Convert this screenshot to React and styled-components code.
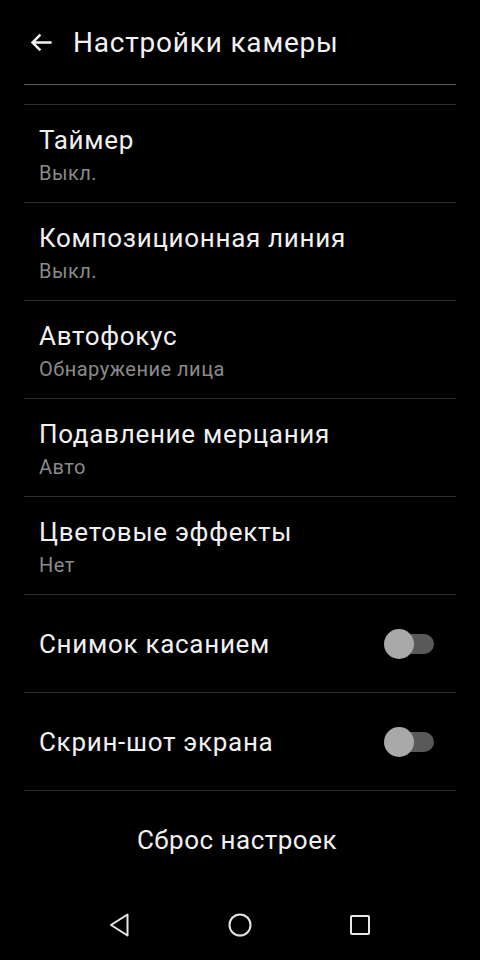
import React from "react";
import styled, { createGlobalStyle } from "styled-components";

const GlobalStyle = createGlobalStyle`
  html, body {
    margin: 0;
    padding: 0;
    background: #000;
  }
  body {
    font-family: Roboto, "Noto Sans", sans-serif;
    color: #fff;
  }
`;

const Screen = styled.div`
  width: 480px;
  height: 960px;
  background: #000;
  display: flex;
  flex-direction: column;
  overflow: hidden;
`;

const Header = styled.header`
  flex: 0 0 84px;
  display: flex;
  align-items: center;
  padding-left: 28px;
  box-sizing: border-box;
  gap: 18px;
`;

const Title = styled.h1`
  margin: 0;
  font-size: 28px;
  font-weight: 400;
  color: #f2f2f2;
  letter-spacing: 0.8px;
`;

const List = styled.div`
  flex: 0 0 auto;
  margin: 0 24px;
  border-top: 1px solid #5c5c5c;
  display: flex;
  flex-direction: column;
`;

const Cut = styled.div`
  flex: 0 0 20px;
  box-sizing: border-box;
  border-bottom: 1px solid #2c2c2c;
`;

const Row = styled.div`
  flex: 0 0 98px;
  box-sizing: border-box;
  border-bottom: 1px solid #2c2c2c;
  display: flex;
  flex-direction: ${(p) => (p.$toggle ? "row" : "column")};
  align-items: ${(p) => (p.$toggle ? "center" : "flex-start")};
  justify-content: ${(p) => (p.$toggle ? "space-between" : "flex-start")};
  padding: ${(p) => (p.$toggle ? "0 22px 0 15px" : "20px 15px 0")};
`;

const RowTitle = styled.div`
  font-size: 26px;
  line-height: 30px;
  color: #f0f0f0;
  letter-spacing: 0.7px;
`;

const RowSub = styled.div`
  margin-top: 6px;
  font-size: 20px;
  line-height: 24px;
  color: #8a8a8a;
  letter-spacing: 0.5px;
`;

const Switch = styled.div`
  position: relative;
  width: 50px;
  height: 30px;
  display: flex;
  align-items: center;
`;

const Track = styled.div`
  margin-left: 6px;
  width: 44px;
  height: 20px;
  border-radius: 10px;
  background: #595959;
`;

const Thumb = styled.div`
  position: absolute;
  left: 0;
  top: 0;
  width: 30px;
  height: 30px;
  border-radius: 50%;
  background: #a9a9a9;
`;

const Reset = styled.div`
  flex: 0 0 98px;
  display: flex;
  align-items: center;
  justify-content: center;
  font-size: 26px;
  letter-spacing: 0.5px;
  color: #f0f0f0;
  padding-right: 6px;
`;

const NavBar = styled.nav`
  flex: 1;
  display: flex;
  align-items: center;
  justify-content: center;
  gap: 96px;
`;

const NavIcon = styled.svg`
  width: 24px;
  height: 24px;
`;

const items = [
  { title: "Таймер", sub: "Выкл." },
  { title: "Композиционная линия", sub: "Выкл." },
  { title: "Автофокус", sub: "Обнаружение лица" },
  { title: "Подавление мерцания", sub: "Авто" },
  { title: "Цветовые эффекты", sub: "Нет" },
];

const toggles = ["Снимок касанием", "Скрин-шот экрана"];

export default function App() {
  return (
    <Screen>
      <GlobalStyle />
      <Header>
        <svg width="27" height="27" viewBox="0 0 24 24">
          <path
            d="M21 12H4M11 5l-7 7 7 7"
            fill="none"
            stroke="#f2f2f2"
            strokeWidth="2.2"
          />
        </svg>
        <Title>Настройки камеры</Title>
      </Header>
      <List>
        <Cut />
        {items.map((it) => (
          <Row key={it.title}>
            <RowTitle>{it.title}</RowTitle>
            <RowSub>{it.sub}</RowSub>
          </Row>
        ))}
        {toggles.map((t) => (
          <Row key={t} $toggle>
            <RowTitle>{t}</RowTitle>
            <Switch>
              <Track />
              <Thumb />
            </Switch>
          </Row>
        ))}
      </List>
      <Reset>Сброс настроек</Reset>
      <NavBar>
        <NavIcon viewBox="0 0 24 24">
          <path
            d="M19.5 1.5v21L3 12z"
            fill="none"
            stroke="#e6e6e6"
            strokeWidth="2"
            strokeLinejoin="round"
          />
        </NavIcon>
        <NavIcon viewBox="0 0 24 24">
          <circle cx="12" cy="12" r="10.5" fill="none" stroke="#e6e6e6" strokeWidth="2" />
        </NavIcon>
        <NavIcon viewBox="0 0 24 24">
          <rect x="3" y="3" width="18" height="18" rx="1" fill="none" stroke="#e6e6e6" strokeWidth="2" />
        </NavIcon>
      </NavBar>
    </Screen>
  );
}
